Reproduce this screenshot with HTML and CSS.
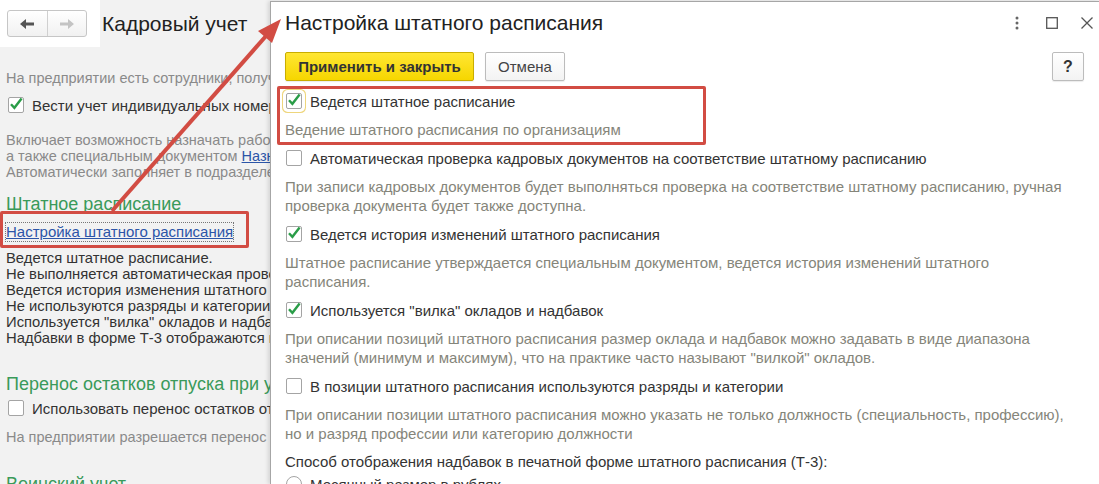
FILE: index.html
```html
<!DOCTYPE html>
<html lang="ru">
<head>
    <meta charset="UTF-8">
    <meta name="viewport" content="width=device-width, initial-scale=1.0">
    <title>Настройка штатного расписания</title>
    <link rel="stylesheet" href="styles.css">
</head>
<body>
    <div class="screen">
        <aside class="form">
            <div class="form-head">
                <div class="nav-bg">
                    <div class="nav">
                        <span class="nav-btn">
                            <svg width="16" height="12" viewBox="0 0 16 12"><path d="M1 6 L7 1 L7 4.5 L15 4.5 L15 7.5 L7 7.5 L7 11 Z" fill="#555"/></svg>
                        </span>
                        <span class="nav-btn">
                            <svg width="16" height="12" viewBox="0 0 16 12"><path d="M15 6 L9 1 L9 4.5 L1 4.5 L1 7.5 L9 7.5 L9 11 Z" fill="#c4c4c4"/></svg>
                        </span>
                    </div>
                </div>
                <div class="form-title">Кадровый учет</div>
            </div>

            <div class="form-body">
                <p class="note note-first">На предприятии есть сотрудники, получающие доходы</p>
                <label class="check-row form-check">
                    <span class="box">
                        <svg width="16" height="16" viewBox="0 0 16 16"><path d="M3 8.2 L6.4 11.8 L13.6 2.6" fill="none" stroke="#2a9d48" stroke-width="2.4"/></svg>
                    </span>
                    Вести учет индивидуальных номеров сотрудников
                </label>
                <p class="note note-block">Включает возможность назначать работникам номера,<br>а также специальным документом <a href="#" class="link">Назначение</a><br>Автоматически заполняет в подразделениях</p>

                <h2 class="group">Штатное расписание</h2>
                <a href="#" class="link link-focus">Настройка штатного расписания</a>
                <p class="summary">Ведется штатное расписание.<br>Не выполняется автоматическая проверка документов<br>Ведется история изменения штатного расписания.<br>Не используются разряды и категории.<br>Используется "вилка" окладов и надбавок.<br>Надбавки в форме Т-3 отображаются в рублях.</p>

                <h2 class="group group-gap">Перенос остатков отпуска при увольнении</h2>
                <label class="check-row form-check2">
                    <span class="box"></span>
                    Использовать перенос остатков отпуска
                </label>
                <p class="note note-last">На предприятии разрешается перенос остатков</p>

                <h2 class="group group-gap2">Воинский учет</h2>
            </div>
        </aside>

        <section class="dialog">
            <div class="dialog-head">
                <div class="dialog-title">Настройка штатного расписания</div>
                <div class="win-icons">
                    <span class="win-icon">
                        <svg width="4" height="14" viewBox="0 0 4 14"><circle cx="2" cy="2" r="1.5" fill="#666"/><circle cx="2" cy="7" r="1.5" fill="#666"/><circle cx="2" cy="12" r="1.5" fill="#666"/></svg>
                    </span>
                    <span class="win-icon">
                        <svg width="12" height="12" viewBox="0 0 12 12"><rect x="0.7" y="0.7" width="10.6" height="10.6" fill="none" stroke="#555" stroke-width="1.3"/></svg>
                    </span>
                    <span class="win-icon">
                        <svg width="12" height="12" viewBox="0 0 12 12"><path d="M0.5 0.5 L11.5 11.5 M11.5 0.5 L0.5 11.5" stroke="#555" stroke-width="1.3"/></svg>
                    </span>
                </div>
            </div>

            <div class="toolbar">
                <button class="btn btn-primary">Применить и закрыть</button>
                <button class="btn btn-cancel">Отмена</button>
                <button class="btn btn-help">?</button>
            </div>

            <div class="options">
                <label class="check-row">
                    <span class="box box-focus">
                        <svg width="16" height="16" viewBox="0 0 16 16"><path d="M3 8.2 L6.4 11.8 L13.6 2.6" fill="none" stroke="#2a9d48" stroke-width="2.4"/></svg>
                    </span>
                    Ведется штатное расписание
                </label>
                <p class="hint">Ведение штатного расписания по организациям</p>

                <label class="check-row">
                    <span class="box"></span>
                    Автоматическая проверка кадровых документов на соответствие штатному расписанию
                </label>
                <p class="hint">При записи кадровых документов будет выполняться проверка на соответствие штатному расписанию, ручная<br>проверка документа будет также доступна.</p>

                <label class="check-row">
                    <span class="box">
                        <svg width="16" height="16" viewBox="0 0 16 16"><path d="M3 8.2 L6.4 11.8 L13.6 2.6" fill="none" stroke="#2a9d48" stroke-width="2.4"/></svg>
                    </span>
                    Ведется история изменений штатного расписания
                </label>
                <p class="hint">Штатное расписание утверждается специальным документом, ведется история изменений штатного<br>расписания.</p>

                <label class="check-row">
                    <span class="box">
                        <svg width="16" height="16" viewBox="0 0 16 16"><path d="M3 8.2 L6.4 11.8 L13.6 2.6" fill="none" stroke="#2a9d48" stroke-width="2.4"/></svg>
                    </span>
                    Используется "вилка" окладов и надбавок
                </label>
                <p class="hint">При описании позиций штатного расписания размер оклада и надбавок можно задавать в виде диапазона<br>значений (минимум и максимум), что на практике часто называют "вилкой" окладов.</p>

                <label class="check-row">
                    <span class="box"></span>
                    В позиции штатного расписания используются разряды и категории
                </label>
                <p class="hint">При описании позиции штатного расписания можно указать не только должность (специальность, профессию),<br>но и разряд профессии или категорию должности</p>

                <p class="label">Способ отображения надбавок в печатной форме штатного расписания (Т-3):</p>
                <label class="check-row">
                    <span class="radio"></span>
                    Месячный размер в рублях
                </label>
            </div>
        </section>

        <div class="mark mark-dialog"></div>
        <div class="mark mark-link"></div>
        <svg class="arrow" width="1099" height="484" viewBox="0 0 1099 484">
            <line x1="112" y1="211" x2="266" y2="36" stroke="#d24c43" stroke-width="4"/>
            <polygon points="281,19 272,43 258,31" fill="#d24c43"/>
        </svg>
    </div>
</body>
</html>
```

FILE: styles.css
```css
:root {
    --form-bg: #f2f2f2;
    --text: #333333;
    --hint: #85857a;
    --note: #8a8a8a;
    --green: #3a9a5a;
    --link: #2c55a8;
    --mark: #d24c43;
    --border: #a6a6a6;
}

* {
    box-sizing: border-box;
}

body {
    margin: 0;
    font-family: "Liberation Sans", Arial, sans-serif;
    color: var(--text);
    background: var(--form-bg);
}

.screen {
    position: relative;
    display: flex;
    width: 1099px;
    height: 484px;
    overflow: hidden;
}

/* left form behind the dialog */

.form {
    flex: none;
    width: 270px;
    height: 484px;
    overflow: hidden;
    white-space: nowrap;
    background: var(--form-bg);
}

.form-head {
    display: flex;
    align-items: center;
    height: 47px;
}

.nav-bg {
    display: flex;
    align-items: center;
    width: 100px;
    height: 47px;
    padding-left: 7px;
    background: #fff;
}

.nav {
    display: flex;
    width: 80px;
    height: 27px;
    border: 1px solid #c6c6c6;
    border-radius: 3px;
    background: linear-gradient(#ffffff, #f1f1f1);
}

.nav-btn {
    display: flex;
    align-items: center;
    justify-content: center;
    flex: 1;
}

.nav-btn + .nav-btn {
    border-left: 1px solid #d0d0d0;
}

.form-title {
    margin-left: 2px;
    font-size: 21px;
    color: #222;
}

.form-body {
    padding-left: 6px;
}

.form-body .check-row {
    font-size: 15px;
}

.note {
    margin: 0;
    font-size: 14.5px;
    line-height: 16px;
    color: var(--note);
}

.note-first {
    margin-top: 23px;
}

.note-block {
    margin-top: 17px;
}

.note-last {
    margin-top: 11px;
}

.link {
    color: var(--link);
}

.group {
    margin: 13px 0 0;
    font-size: 18px;
    font-weight: normal;
    line-height: 22px;
    color: var(--green);
}

.group-gap {
    margin-top: 27px;
}

.group-gap2 {
    margin-top: 28px;
}

.link-focus {
    display: inline-block;
    margin-top: 8px;
    font-size: 15px;
    line-height: 18px;
    outline: 1px dotted #777;
}

.summary {
    margin: 9px 0 0;
    font-size: 14.8px;
    line-height: 16px;
    color: var(--text);
}

.form-check {
    margin-top: 9px;
    padding-left: 1px;
}

.form-check2 {
    margin-top: 3px;
    padding-left: 1px;
}

/* dialog */

.dialog {
    flex: 1;
    margin-top: 1px;
    background: #fff;
    border-top: 1px solid var(--border);
    border-left: 1px solid var(--border);
    box-shadow: -2px 0 4px rgba(0, 0, 0, 0.12);
    white-space: nowrap;
}

.dialog-head {
    display: flex;
    align-items: center;
    height: 41px;
    padding-left: 14px;
}

.dialog-title {
    font-size: 21px;
    color: #222;
}

.win-icons {
    display: flex;
    gap: 11px;
    margin-left: auto;
}

.win-icon {
    display: flex;
    align-items: center;
    justify-content: center;
    width: 24px;
    height: 24px;
}

.toolbar {
    display: flex;
    gap: 11px;
    margin-top: 9px;
    padding: 0 15px 0 14px;
}

.btn {
    height: 29px;
    padding: 0 12px;
    font-family: inherit;
    font-size: 15px;
    color: #444;
    background: linear-gradient(#ffffff, #f3f3f3);
    border: 1px solid #bcbcbc;
    border-radius: 2px;
    box-shadow: 0 1px 1px rgba(0, 0, 0, 0.08);
}

.btn-primary {
    width: 189px;
    font-weight: bold;
    color: #333;
    background: linear-gradient(#ffe633, #f6d600);
    border-color: #c9ad00;
}

.btn-cancel {
    width: 80px;
}

.btn-help {
    width: 32px;
    margin-left: auto;
    padding: 0;
    font-size: 16px;
    font-weight: bold;
    color: #333;
}

.options {
    padding: 10px 14px 0;
}

.check-row {
    display: flex;
    align-items: center;
    gap: 8px;
    height: 20px;
    font-size: 15px;
    color: var(--text);
}

.box {
    position: relative;
    flex: none;
    width: 16px;
    height: 16px;
    margin-left: 1px;
    background: #fff;
    border: 1px solid #a4a4a4;
    border-radius: 2px;
}

.box svg {
    position: absolute;
    top: -2px;
    left: -1px;
    overflow: visible;
}

.box-focus {
    box-shadow: 0 0 0 3px #fff, 0 0 0 4px #eed67c;
}

.radio {
    flex: none;
    width: 16px;
    height: 16px;
    margin-left: 1px;
    border: 1px solid #a4a4a4;
    border-radius: 50%;
    background: #fff;
}

.hint {
    margin: 9px 0 9px;
    font-size: 15px;
    line-height: 19px;
    color: var(--hint);
}

.label {
    margin: 0 0 3px;
    font-size: 15px;
    line-height: 19px;
    color: var(--text);
}

/* annotations drawn over the screenshot */

.mark {
    position: absolute;
    border: 3px solid var(--mark);
    border-radius: 2px;
}

.mark-dialog {
    left: 277px;
    top: 86px;
    width: 429px;
    height: 59px;
}

.mark-link {
    left: 0;
    top: 211px;
    width: 249px;
    height: 37px;
}

.arrow {
    position: absolute;
    left: 0;
    top: 0;
    pointer-events: none;
}
```
